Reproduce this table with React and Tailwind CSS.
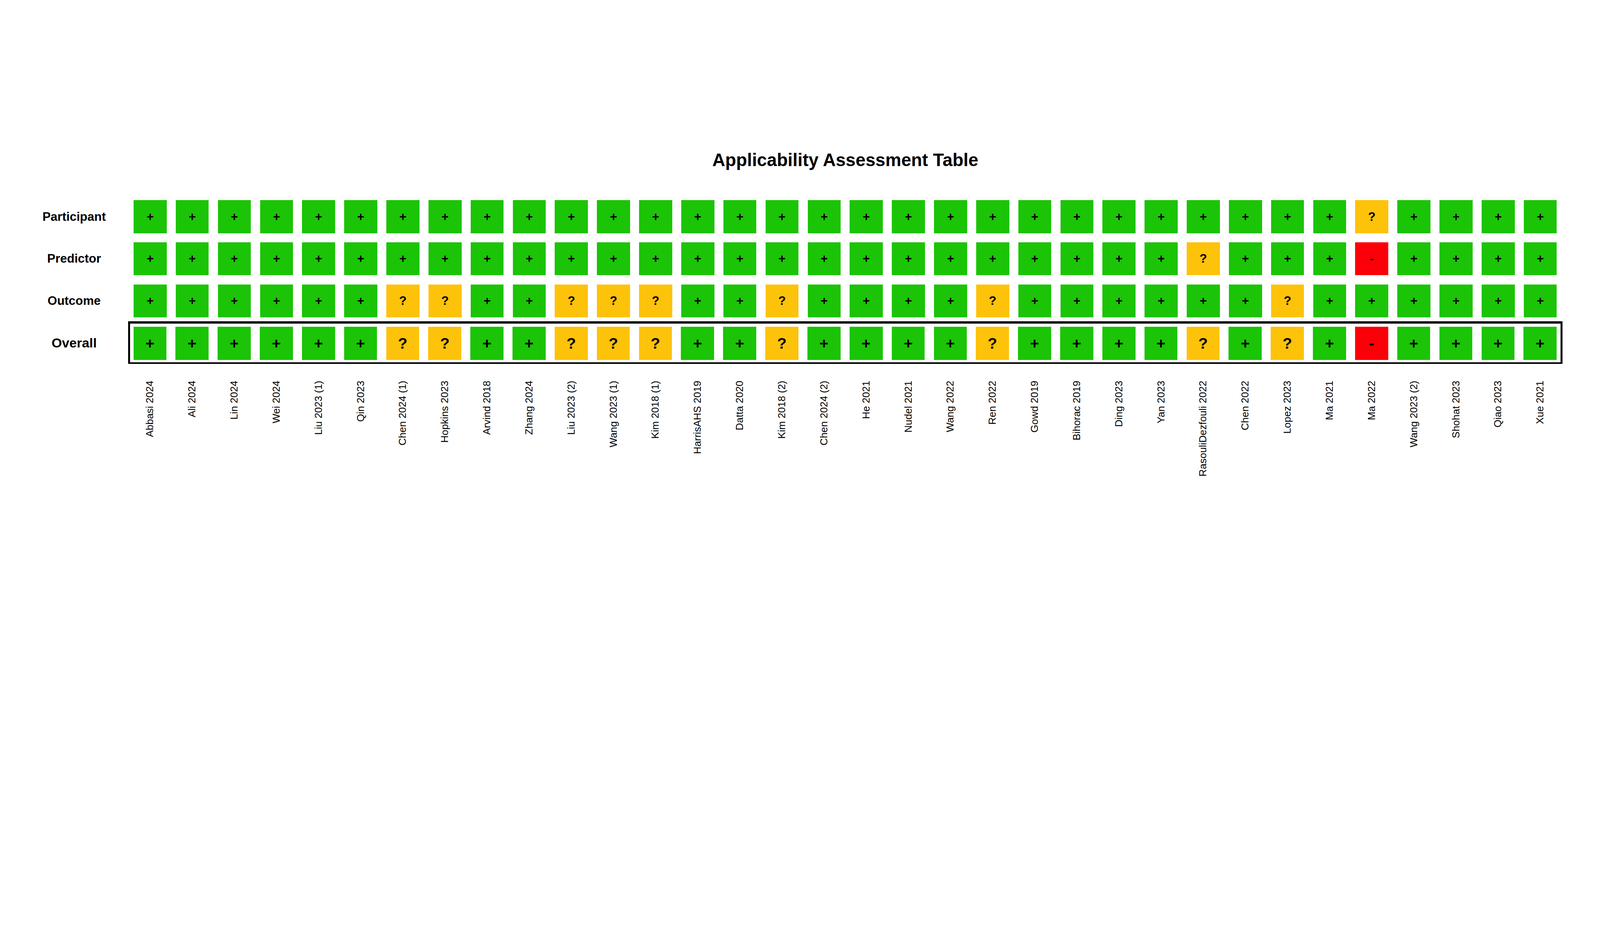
import React from 'react';

const studies = [
  'Abbasi 2024', 'Ali 2024', 'Lin 2024', 'Wei 2024', 'Liu 2023 (1)', 'Qin 2023',
  'Chen 2024 (1)', 'Hopkins 2023', 'Arvind 2018', 'Zhang 2024', 'Liu 2023 (2)',
  'Wang 2023 (1)', 'Kim 2018 (1)', 'HarrisAHS 2019', 'Datta 2020', 'Kim 2018 (2)',
  'Chen 2024 (2)', 'He 2021', 'Nudel 2021', 'Wang 2022', 'Ren 2022', 'Gowd 2019',
  'Bihorac 2019', 'Ding 2023', 'Yan 2023', 'RasouliDezfouli 2022', 'Chen 2022',
  'Lopez 2023', 'Ma 2021', 'Ma 2022', 'Wang 2023 (2)', 'Shohat 2023', 'Qiao 2023',
  'Xue 2021',
];

// build a row of 34 ratings, '+' unless listed
const makeRow = (unclear = [], high = []) =>
  studies.map((_, i) => (high.includes(i) ? '-' : unclear.includes(i) ? '?' : '+'));

const rows = [
  { label: 'Participant', values: makeRow([29]) },
  { label: 'Predictor', values: makeRow([25], [29]) },
  { label: 'Outcome', values: makeRow([6, 7, 10, 11, 12, 15, 20, 27]) },
];

const overall = makeRow([6, 7, 10, 11, 12, 15, 20, 25, 27], [29]);

const cellColor = {
  '+': 'bg-[#1bc406]',
  '?': 'bg-[#fdc20a]',
  '-': 'bg-[#fb0008]',
};

const Cell = ({ value, big }) => (
  <div
    className={`w-[124px] h-[124px] shrink-0 flex items-center justify-center font-bold leading-none text-black ${cellColor[value]} ${big ? 'text-[58px]' : 'text-[46px]'}`}
  >
    {value}
  </div>
);

const App = () => {
  // the figure is laid out on a 6000px wide sheet; fit it to the actual window width
  const scale = typeof window !== 'undefined' ? window.innerWidth / 6000 : 1;

  return (
    <div
      className="w-[6000px] h-[2400px] overflow-hidden bg-white text-black font-['Liberation_Sans',Arial,sans-serif] pt-[567px] pl-[100px]"
      style={{ zoom: scale }}
    >
      {/* Title */}
      <div className="ml-[401px] w-[5338px] text-center text-[67px] font-bold leading-none">
        Applicability Assessment Table
      </div>

      {/* faint tile edges above first row */}
      <div className="ml-[392px] mt-[107px] flex gap-[16px]">
        {studies.map((s) => (
          <div key={s} className="w-[142px] h-px bg-[#e8f4e8]" />
        ))}
      </div>

      <div className="mt-[8px] flex flex-col gap-[34px]">
        {rows.map((row) => (
          <div key={row.label} className="flex items-center">
            <div className="w-[356px] mr-[45px] text-center text-[46px] font-bold leading-none">{row.label}</div>
            <div className="flex gap-[34px]">
              {row.values.map((v, i) => (
                <Cell key={i} value={v} />
              ))}
            </div>
          </div>
        ))}
      </div>

      {/* Overall row with frame */}
      <div className="mt-[14px] flex items-center">
        <div className="w-[356px] mr-[24px] text-center text-[50px] font-bold leading-none">Overall</div>
        <div className="flex gap-[34px] border-[8px] border-t-[9px] border-b-[7px] border-black pl-[13px] pr-[14px] pt-[12px] pb-[10px]">
          {overall.map((v, i) => (
            <Cell key={i} value={v} big />
          ))}
        </div>
      </div>

      {/* Study labels */}
      <div className="ml-[401px] mt-[63px] flex gap-[34px] items-start">
        {studies.map((s) => (
          <div key={s} className="w-[124px] shrink-0 flex justify-center">
            <span className="[writing-mode:vertical-rl] rotate-180 text-[38px] leading-none whitespace-nowrap">
              {s}
            </span>
          </div>
        ))}
      </div>
    </div>
  );
};

export default App;
